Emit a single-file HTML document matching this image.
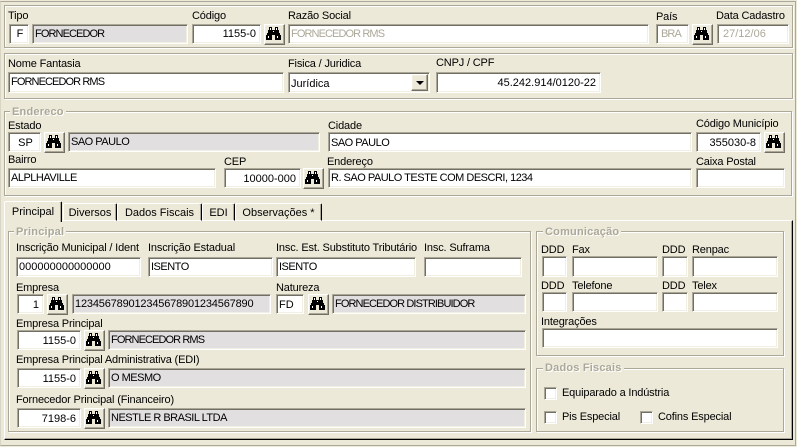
<!DOCTYPE html>
<html><head><meta charset="utf-8">
<style>
html,body{margin:0;padding:0}
body{width:797px;height:447px;background:#ECE9D8;position:relative;overflow:hidden;font-family:"Liberation Sans",sans-serif;font-size:11px;color:#000}
div{position:absolute;box-sizing:border-box}
.l{white-space:nowrap;line-height:13px;height:13px;margin-top:1px;letter-spacing:-.16px}
.i,.g{background:#fff;border:1px solid;border-color:#aca899 #fff #fff #aca899;box-shadow:inset 1px 1px 0 #716f64,inset -1px -1px 0 #f1efe2;white-space:nowrap;overflow:hidden;line-height:14px;padding:2px 0 0 2px}
.g{background:#e2dfe0}
.r{text-align:right;padding-right:4px}
.c{text-align:center}
.d{color:#aca899}
.u{letter-spacing:-.5px}
.v{letter-spacing:-.9px}
.n{letter-spacing:-.17px}
.b{background:#ECE9D8;border:1px solid;border-color:#fff #716f64 #716f64 #fff;box-shadow:inset -1px -1px 0 #aca899,inset 1px 1px 0 #f1efe2;width:21px;height:21px}
.b svg{position:absolute;left:1px;top:2px}
.p{border:1px solid #aca899;box-shadow:1px 1px 0 #fff,inset 1px 1px 0 #fff}
.leg{font-weight:bold;color:#aca899;text-shadow:1px 1px 0 #fff;background:#ECE9D8;padding:0 2px;white-space:nowrap;line-height:13px;height:13px;font-size:11px;margin-top:1px;letter-spacing:.2px}
.t{border:1px solid;border-color:#fff #000 transparent #fff;border-radius:2px 2px 0 0;white-space:nowrap;line-height:14px;text-align:center;padding-top:3px;box-shadow:inset -1px 0 0 #aca899}
.k{background:#fff;border:1px solid;border-color:#aca899 #fff #fff #aca899;box-shadow:inset 1px 1px 0 #716f64,inset -1px -1px 0 #f1efe2;width:13px;height:13px}
</style></head><body>
<svg width="0" height="0" style="position:absolute"><defs><symbol id="bn" viewBox="0 0 16 14"><path shape-rendering="crispEdges" fill="#000" d="M3 0h3v3h3v-3h3v3h1v3h1v2h1v5h-6v-5h-3v5h-6v-5h1v-2h1v-3h1z"/><path shape-rendering="crispEdges" fill="#fff" d="M4 1h1v2h-1zM10 1h1v2h-1zM2 9h1v2h-1zM11 9h1v2h-1zM7 4h1v1h-1z"/></symbol></defs></svg>

<div style="left:0;top:1px;width:796px;height:445px;border:1px solid #aca899;border-left-color:#d8d5c5"></div>

<div class="p" style="left:4px;top:5px;width:789px;height:43px"></div>
<div class="l" style="left:8px;top:9px">Tipo</div>
<div class="i c" style="left:9px;top:24px;width:20px;height:20px">F</div>
<div class="g v" style="left:32px;top:24px;width:156px;height:20px">FORNECEDOR</div>
<div class="l" style="left:192px;top:9px">Código</div>
<div class="i r" style="left:192px;top:24px;width:69px;height:20px">1155-0</div>
<div class="b" style="left:264px;top:24px"><svg width="16" height="14"><use href="#bn"/></svg></div>
<div class="l" style="left:288px;top:9px">Razão Social</div>
<div class="i d v" style="left:288px;top:24px;width:361px;height:20px;background:#fff">FORNECEDOR RMS</div>
<div class="l" style="left:656px;top:10px">País</div>
<div class="i d v" style="left:656px;top:24px;width:33px;height:20px;padding-left:4px">BRA</div>
<div class="b" style="left:692px;top:24px"><svg width="16" height="14"><use href="#bn"/></svg></div>
<div class="l" style="left:716px;top:9px">Data Cadastro</div>
<div class="i d" style="left:717px;top:24px;width:72px;height:20px;padding-left:5px">27/12/06</div>

<div class="p" style="left:4px;top:53px;width:789px;height:46px"></div>
<div class="l" style="left:8px;top:57px">Nome Fantasia</div>
<div class="i v" style="left:8px;top:72px;width:276px;height:21px;padding-top:2px">FORNECEDOR RMS</div>
<div class="l" style="left:288px;top:57px">Fisica / Juridica</div>
<div class="i" style="left:288px;top:72px;width:142px;height:21px;padding-top:4px">Jurídica</div>
<div class="b" style="left:411px;top:74px;width:17px;height:17px"><div style="left:4px;top:6px;width:0;height:0;border:4px solid transparent;border-top:4px solid #000;border-bottom:0"></div></div>
<div class="l" style="left:436px;top:56px">CNPJ / CPF</div>
<div class="i r" style="left:436px;top:72px;width:165px;height:21px;padding-top:3px">45.242.914/0120-22</div>

<div class="p" style="left:4px;top:111px;width:788px;height:85px"></div>
<div class="leg" style="left:10px;top:105px">Endereco</div>
<div class="l" style="left:8px;top:119px">Estado</div>
<div class="i c" style="left:8px;top:132px;width:33px;height:20px;padding-top:3px">SP</div>
<div class="b" style="left:44px;top:132px"><svg width="16" height="14"><use href="#bn"/></svg></div>
<div class="g u" style="left:68px;top:132px;width:252px;height:20px">SAO PAULO</div>
<div class="l" style="left:328px;top:119px">Cidade</div>
<div class="i u" style="left:328px;top:132px;width:364px;height:20px;padding-top:3px">SAO PAULO</div>
<div class="l" style="left:696px;top:117px">Código Município</div>
<div class="i r" style="left:696px;top:132px;width:65px;height:20px;padding-top:3px">355030-8</div>
<div class="b" style="left:764px;top:132px"><svg width="16" height="14"><use href="#bn"/></svg></div>
<div class="l" style="left:8px;top:153px">Bairro</div>
<div class="i u" style="left:8px;top:168px;width:208px;height:20px">ALPLHAVILLE</div>
<div class="l" style="left:224px;top:155px">CEP</div>
<div class="i r" style="left:224px;top:168px;width:77px;height:20px;padding-top:3px">10000-000</div>
<div class="b" style="left:303px;top:168px"><svg width="16" height="14"><use href="#bn"/></svg></div>
<div class="l" style="left:327px;top:155px">Endereço</div>
<div class="i u" style="left:328px;top:168px;width:364px;height:20px">R. SAO PAULO TESTE COM DESCRI, 1234</div>
<div class="l" style="left:696px;top:155px">Caixa Postal</div>
<div class="i" style="left:696px;top:168px;width:89px;height:20px"></div>

<div style="left:4px;top:220px;width:789px;height:220px;border:1px solid;border-color:#fff #000 #000 #fff;box-shadow:inset -1px -1px 0 #aca899"></div>
<div class="t" style="left:4px;top:201px;width:58px;height:21px;background:#ECE9D8;z-index:2;border-bottom:0">Principal</div>
<div class="t" style="left:63px;top:203px;width:54px;height:18px;padding-top:2px">Diversos</div>
<div class="t" style="left:117px;top:203px;width:85px;height:18px;padding-top:2px">Dados Fiscais</div>
<div class="t" style="left:202px;top:203px;width:33px;height:18px;padding-top:2px">EDI</div>
<div class="t" style="left:235px;top:203px;width:87px;height:18px;padding-top:2px">Observações *</div>

<div class="p" style="left:8px;top:231px;width:523px;height:201px"></div>
<div class="leg" style="left:14px;top:225px">Principal</div>
<div class="l" style="left:16px;top:241px">Inscrição Municipal / Ident</div>
<div class="i" style="left:16px;top:257px;width:125px;height:20px">000000000000000</div>
<div class="l" style="left:148px;top:241px">Inscrição Estadual</div>
<div class="i u" style="left:148px;top:257px;width:125px;height:20px">ISENTO</div>
<div class="l" style="left:276px;top:241px">Insc. Est. Substituto Tributário</div>
<div class="i u" style="left:276px;top:257px;width:140px;height:20px">ISENTO</div>
<div class="l" style="left:424px;top:241px">Insc. Suframa</div>
<div class="i" style="left:424px;top:257px;width:98px;height:20px"></div>
<div class="l" style="left:16px;top:281px">Empresa</div>
<div class="i r" style="left:17px;top:294px;width:27px;height:20px;padding-top:3px">1</div>
<div class="b" style="left:47px;top:294px"><svg width="16" height="14"><use href="#bn"/></svg></div>
<div class="g n" style="left:72px;top:294px;width:199px;height:20px">123456789012345678901234567890</div>
<div class="l" style="left:276px;top:281px">Natureza</div>
<div class="i" style="left:276px;top:294px;width:28px;height:20px;padding-top:3px">FD</div>
<div class="b" style="left:308px;top:294px"><svg width="16" height="14"><use href="#bn"/></svg></div>
<div class="g v" style="left:332px;top:294px;width:194px;height:20px">FORNECEDOR DISTRIBUIDOR</div>

<div class="l" style="left:16px;top:317px">Empresa Principal</div>
<div class="i r" style="left:17px;top:330px;width:64px;height:20px;padding-top:3px">1155-0</div>
<div class="b" style="left:84px;top:330px"><svg width="16" height="14"><use href="#bn"/></svg></div>
<div class="g v" style="left:108px;top:330px;width:418px;height:20px">FORNECEDOR RMS</div>
<div class="l" style="left:16px;top:353px">Empresa Principal Administrativa (EDI)</div>
<div class="i r" style="left:17px;top:368px;width:64px;height:20px;padding-top:3px">1155-0</div>
<div class="b" style="left:84px;top:368px"><svg width="16" height="14"><use href="#bn"/></svg></div>
<div class="g u" style="left:108px;top:368px;width:418px;height:20px">O MESMO</div>
<div class="l" style="left:16px;top:393px">Fornecedor Principal (Financeiro)</div>
<div class="i r" style="left:17px;top:408px;width:64px;height:20px;padding-top:3px">7198-6</div>
<div class="b" style="left:84px;top:408px"><svg width="16" height="14"><use href="#bn"/></svg></div>
<div class="g u" style="left:108px;top:408px;width:418px;height:20px">NESTLE R BRASIL LTDA</div>

<div class="p" style="left:536px;top:231px;width:248px;height:125px"></div>
<div class="leg" style="left:543px;top:225px">Comunicação</div>
<div class="l" style="left:541px;top:243px">DDD</div>
<div class="i" style="left:542px;top:256px;width:25px;height:21px"></div>
<div class="l" style="left:572px;top:243px">Fax</div>
<div class="i" style="left:572px;top:256px;width:86px;height:21px"></div>
<div class="l" style="left:662px;top:243px">DDD</div>
<div class="i" style="left:662px;top:256px;width:26px;height:21px"></div>
<div class="l" style="left:692px;top:243px">Renpac</div>
<div class="i" style="left:692px;top:256px;width:86px;height:21px"></div>
<div class="l" style="left:541px;top:279px">DDD</div>
<div class="i" style="left:542px;top:292px;width:25px;height:20px"></div>
<div class="l" style="left:572px;top:279px">Telefone</div>
<div class="i" style="left:572px;top:292px;width:86px;height:20px"></div>
<div class="l" style="left:662px;top:279px">DDD</div>
<div class="i" style="left:662px;top:292px;width:26px;height:20px"></div>
<div class="l" style="left:692px;top:279px">Telex</div>
<div class="i" style="left:692px;top:292px;width:86px;height:20px"></div>
<div class="l" style="left:541px;top:315px">Integrações</div>
<div class="i" style="left:542px;top:328px;width:236px;height:20px"></div>

<div class="p" style="left:536px;top:368px;width:248px;height:64px"></div>
<div class="leg" style="left:543px;top:361px">Dados Fiscais</div>
<div class="k" style="left:544px;top:387px"></div>
<div class="l" style="left:562px;top:386px">Equiparado a Indústria</div>
<div class="k" style="left:544px;top:411px"></div>
<div class="l" style="left:562px;top:410px">Pis Especial</div>
<div class="k" style="left:640px;top:411px"></div>
<div class="l" style="left:658px;top:410px">Cofins Especial</div>
</body></html>
